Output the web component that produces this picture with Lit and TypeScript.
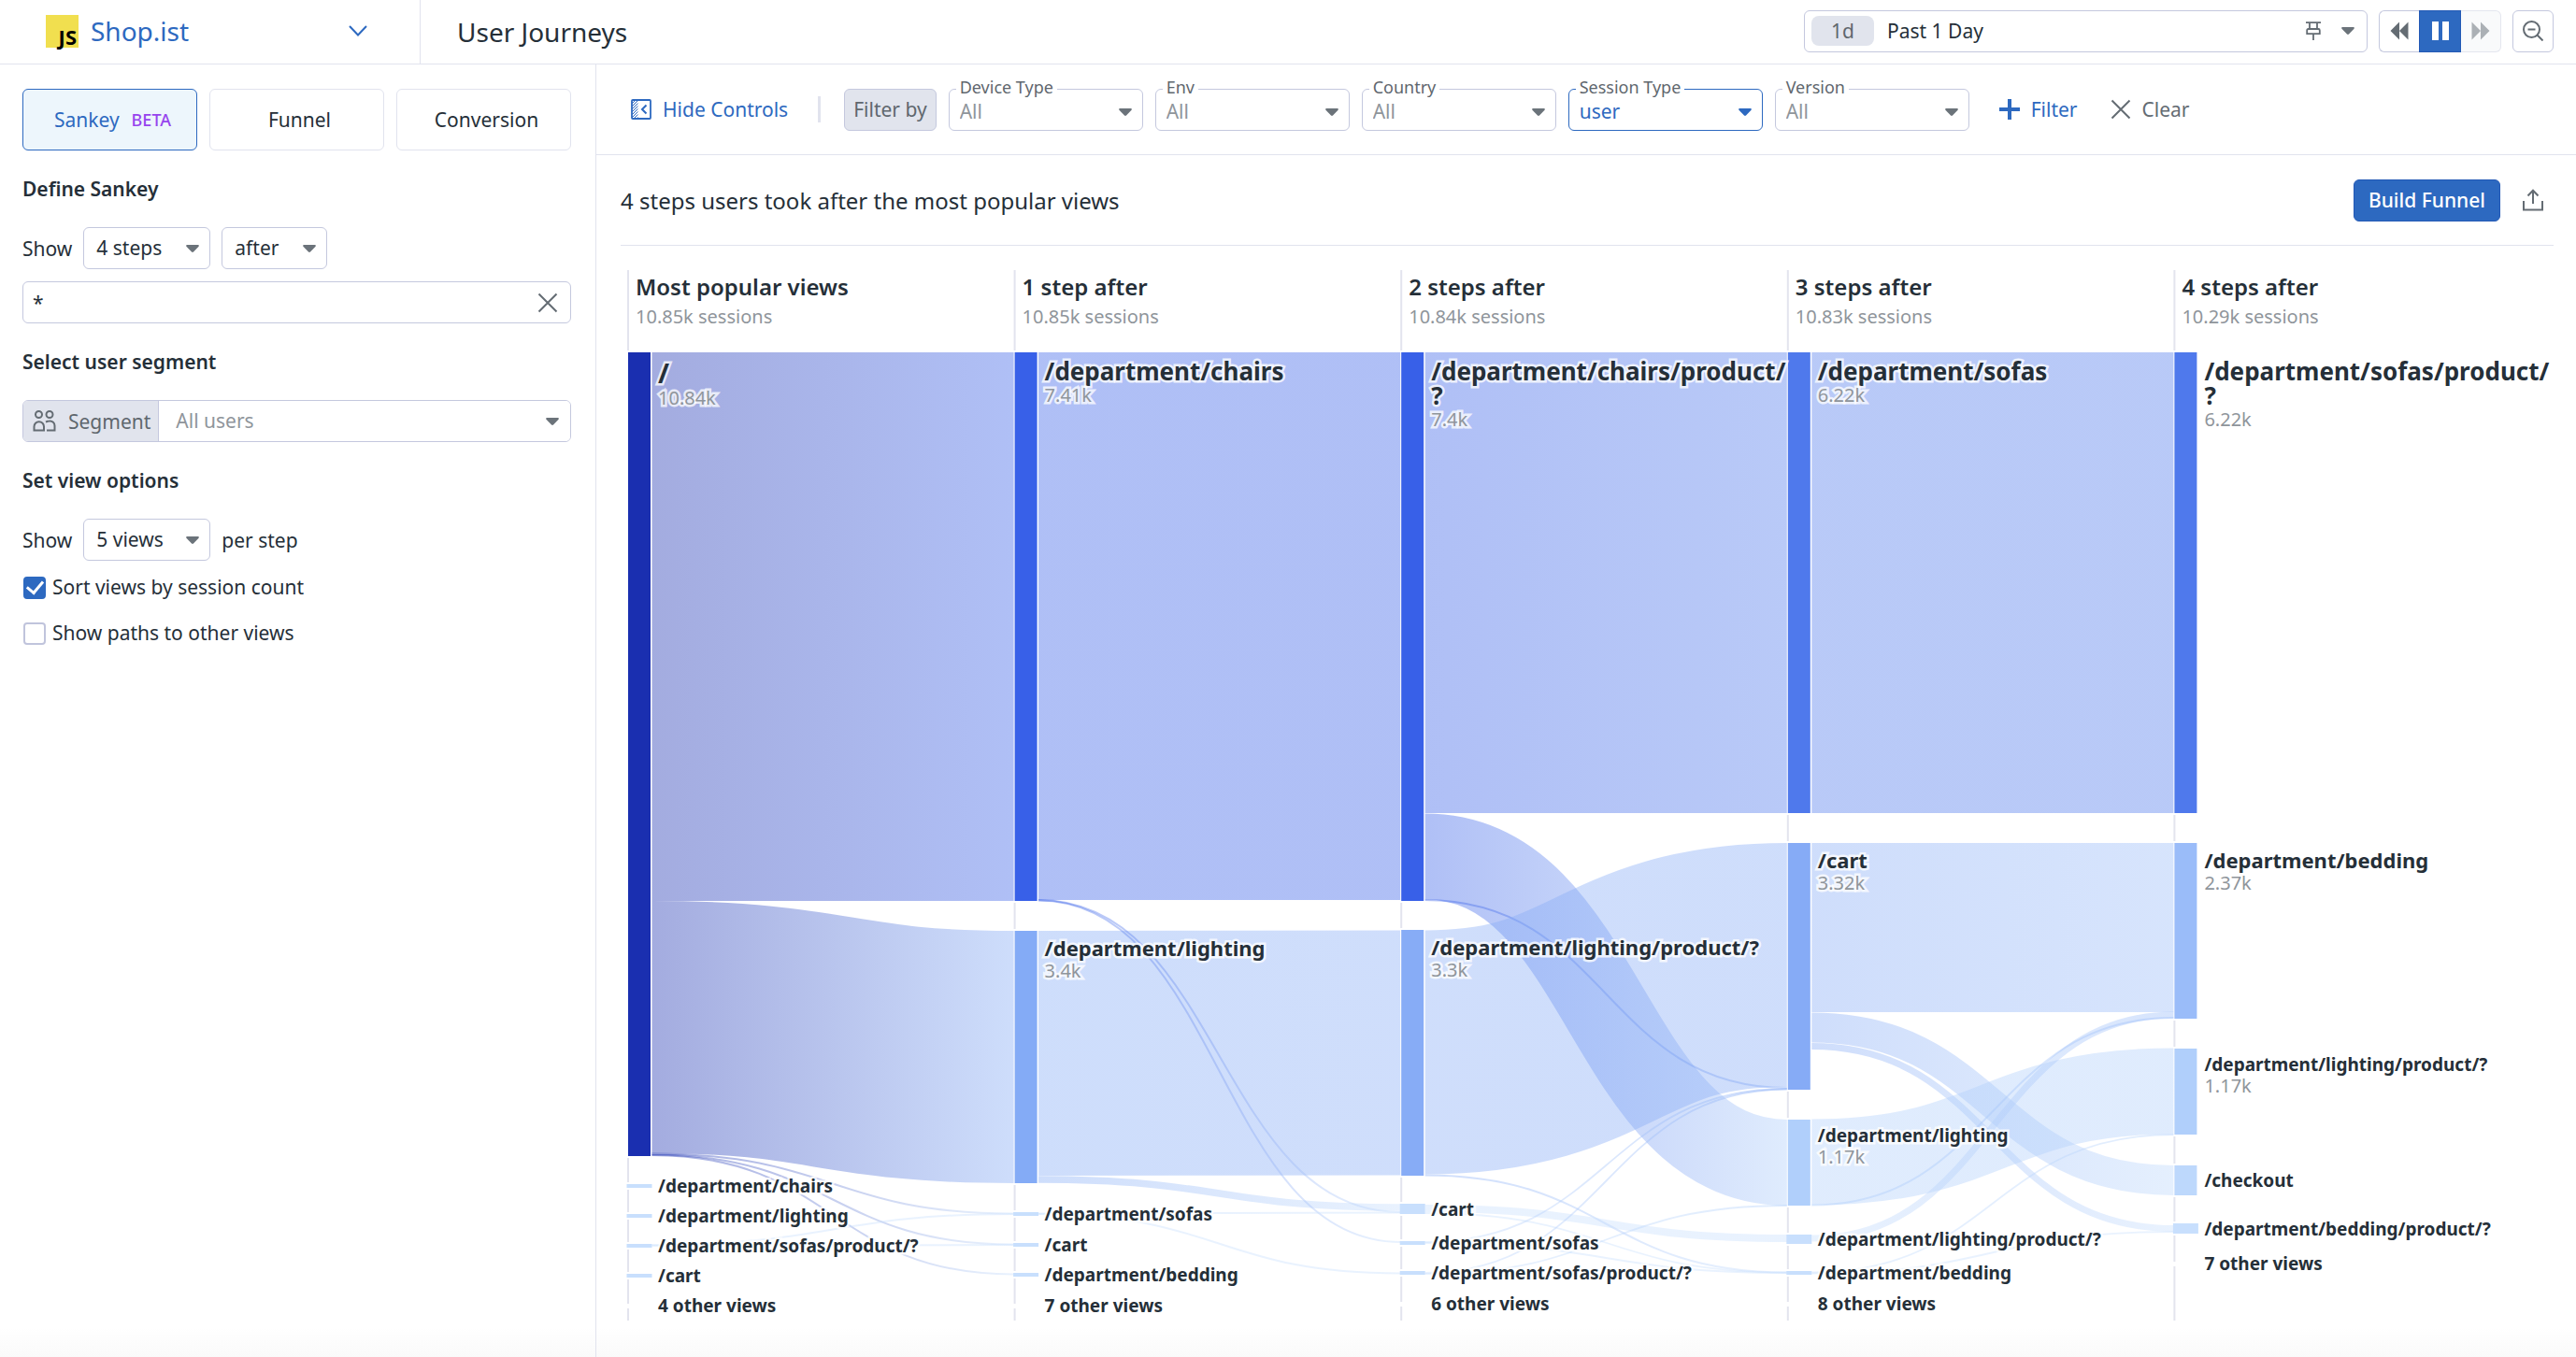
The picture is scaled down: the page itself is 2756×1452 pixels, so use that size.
import { LitElement, html, svg, css, nothing } from "lit";
import { customElement, property, state } from "lit/decorators.js";
import { classMap } from "lit/directives/class-map.js";

const controls = css`
  * {
    box-sizing: border-box;
  }
  button,
  input,
  select {
    font: inherit;
    color: inherit;
    margin: 0;
  }
  button {
    cursor: pointer;
    background: none;
    border: 0;
    padding: 0;
  }
  svg {
    display: block;
    flex: none;
  }
  .pick {
    position: relative;
    display: flex;
    align-items: center;
  }
  .pick select {
    appearance: none;
    width: 100%;
    height: 45px;
    border: 1px solid #c4c8de;
    border-radius: 6px;
    background: #fff;
    padding: 0 36px 2px 13px;
    outline: 0;
  }
  .pick .caret {
    position: absolute;
    right: 11px;
    pointer-events: none;
  }
`;

const caret = (color = "#6b737a") => html`<svg class="caret" width="16" height="10" viewBox="0 0 16 10">
  <path d="M2 1h12q1.400 .3.600 1.700L9 8.500q-1 .8-2 0L1.400 2.700Q.6 1.300 2 1z" fill=${color} />
</svg>`;

const cross = html`<svg width="22" height="22" viewBox="0 0 22 22">
  <path d="M1.500 1.500l19 19M20.500 1.500l-19 19" stroke="#646c73" stroke-width="2" fill="none" />
</svg>`;

/* ---------- top bar ---------- */

@customElement("top-bar")
class TopBar extends LitElement {
  static styles = [
    controls,
    css`
      :host {
        display: flex;
        height: 69px;
        border-bottom: 1px solid #e1e3ee;
      }
      .app {
        width: 450px;
        border-right: 1px solid #e1e3ee;
        display: flex;
        align-items: center;
        padding: 0 56px 2px 49px;
        gap: 13px;
        font-size: 28px;
        color: #2d69c0;
        text-align: left;
      }
      .app svg {
        overflow: visible;
      }
      .app .name {
        flex: 1;
      }
      .title {
        margin: 0;
        flex: 1;
        padding-left: 39px;
        align-self: center;
        font-size: 28px;
        line-height: 40px;
        font-weight: 400;
      }
      .time {
        display: flex;
        align-items: center;
        gap: 12px;
        padding: 0 24px 2px 0;
      }
      .range {
        width: 603px;
        height: 45px;
        border: 1px solid #c4c8de;
        border-radius: 6px;
        display: flex;
        align-items: center;
        padding: 0 12px 0 7px;
        text-align: left;
      }
      .pill {
        width: 67px;
        height: 32px;
        line-height: 32px;
        border-radius: 8px;
        background: #e1e4ed;
        color: #5f676e;
        text-align: center;
        margin-right: 14px;
      }
      .range .text {
        flex: 1;
      }
      .range .pin {
        margin-right: 21px;
      }
      .play {
        display: flex;
        height: 45px;
      }
      .play button {
        width: 43px;
        border: 1px solid #c4c8de;
        display: grid;
        place-items: center;
      }
      .play .back {
        border-radius: 6px 0 0 6px;
        border-right: 0;
      }
      .play .pause {
        width: 45px;
        background: #2d69c0;
        border-color: #2359b5;
      }
      .play .next {
        border-radius: 0 6px 6px 0;
        border-left: 0;
        border-color: #e4e6ef;
        background: #f9fafb;
      }
      .zoom {
        width: 44px;
        height: 45px;
        border: 1px solid #c4c8de;
        border-radius: 6px;
        display: grid;
        place-items: center;
      }
    `,
  ];

  render() {
    return html`
      <button class="app">
        <svg width="35" height="35" viewBox="0 0 35 35">
          <rect width="35" height="35" fill="#f1df4f" />
          <text x="33" y="32" text-anchor="end" font-family="Noto Sans, sans-serif" font-weight="700" font-size="22" fill="#000">JS</text>
        </svg>
        <span class="name">Shop.ist</span>
        <svg width="20" height="12" viewBox="0 0 20 12">
          <path d="M1 1l9 9.500L19 1" fill="none" stroke="#2d69c0" stroke-width="2" />
        </svg>
      </button>
      <h1 class="title">User Journeys</h1>
      <div class="time">
        <button class="range">
          <span class="pill">1d</span>
          <span class="text">Past 1 Day</span>
          <svg class="pin" width="16" height="20" viewBox="0 0 16 20">
            <path d="M0 1.200h16M4 1.500V8M12 1.500V8M1.200 13.200V9.500Q1.200 8 2.700 8h10.600q1.500 0 1.500 1.500v3.700zM8 13.500V20" fill="none" stroke="#646c73" stroke-width="1.800" />
          </svg>
          ${caret()}
        </button>
        <div class="play">
          <button class="back" aria-label="Back">
            <svg width="20" height="20" viewBox="0 0 20 20"><path d="M10 .5v19L.5 10zM19.500 .5v19L10 10z" fill="#646c73" /></svg>
          </button>
          <button class="pause" aria-label="Pause">
            <svg width="18" height="20" viewBox="0 0 18 20"><path d="M0 0h7v20H0zM11 0h7v20h-7z" fill="#fff" /></svg>
          </button>
          <button class="next" aria-label="Forward" disabled>
            <svg width="20" height="20" viewBox="0 0 20 20"><path d="M.5 .5v19L10 10zM10 .5v19L19.500 10z" fill="#abb0b5" /></svg>
          </button>
        </div>
        <button class="zoom" aria-label="Zoom out">
          <svg width="22" height="22" viewBox="0 0 22 22">
            <circle cx="9.500" cy="9.500" r="8.500" fill="none" stroke="#646c73" stroke-width="2" />
            <path d="M5.500 9.500h8M15.500 15.500l6 6" stroke="#646c73" stroke-width="2" />
          </svg>
        </button>
      </div>
    `;
  }
}

/* ---------- side panel ---------- */

@customElement("side-panel")
class SidePanel extends LitElement {
  @state() private mode = "Sankey";

  static styles = [
    controls,
    css`
      :host {
        display: block;
        padding: 26px 26px 0 24px;
      }
      .tabs {
        display: grid;
        grid-template-columns: repeat(3, 1fr);
        gap: 13px;
      }
      .tab {
        height: 66px;
        border: 1px solid #e1e3ee;
        border-radius: 6px;
        display: flex;
        align-items: center;
        justify-content: center;
        gap: 13px;
        padding-left: 6px;
      }
      .on {
        border-color: #2d69c0;
        background: #edf6fc;
        color: #2d69c0;
      }
      .beta {
        font-size: 18px;
        font-weight: 500;
        color: #9744ee;
      }
      h2 {
        margin: 26px 0;
        font-size: 21px;
        line-height: 30px;
        font-weight: 600;
      }
      .line {
        display: flex;
        align-items: center;
        gap: 12px;
      }
      .steps {
        width: 136px;
      }
      .when {
        width: 113px;
      }
      .query {
        position: relative;
        margin-top: 13px;
        display: flex;
        align-items: center;
      }
      .query input {
        width: 100%;
        height: 45px;
        border: 1px solid #c4c8de;
        border-radius: 6px;
        padding: 0 48px 0 10px;
      }
      .query button {
        position: absolute;
        right: 14px;
      }
      .segment {
        display: flex;
        height: 45px;
        border: 1px solid #c4c8de;
        border-radius: 6px;
        overflow: hidden;
      }
      .segment label {
        display: flex;
        align-items: center;
        gap: 13px;
        padding: 0 8px 0 10px;
        background: #e1e4ed;
        border-right: 1px solid #c4c8de;
        color: #5f676e;
      }
      .segment .pick {
        flex: 1;
        color: #8f959b;
      }
      .segment select {
        border: 0;
        border-radius: 0;
        height: 43px;
        padding-left: 18px;
      }
      .check {
        display: flex;
        align-items: center;
        gap: 7px;
        line-height: 29px;
        margin: 14px 0 20px 1px;
      }
      .check input {
        appearance: none;
        width: 24px;
        height: 24px;
        border: 2px solid #c0c4dc;
        border-radius: 4px;
        display: grid;
        place-items: center;
      }
      .check input:checked {
        background: #2d69c0;
        border-color: #2d69c0;
      }
      .check input:checked::before {
        content: "";
        width: 8px;
        height: 14px;
        border: solid #fff;
        border-width: 0 3px 3px 0;
        transform: translateY(-2px) rotate(40deg);
      }
    `,
  ];

  render() {
    return html`
      <div class="tabs">
        ${["Sankey", "Funnel", "Conversion"].map(
          (m) => html`<button class=${classMap({ tab: true, on: this.mode === m })} @click=${() => (this.mode = m)}>
            ${m}${m === "Sankey" ? html`<span class="beta">BETA</span>` : nothing}
          </button>`
        )}
      </div>
      <h2>Define Sankey</h2>
      <div class="line">
        <label for="steps">Show</label>
        <span class="pick steps"><select id="steps"><option>4 steps</option></select>${caret()}</span>
        <span class="pick when"><select aria-label="Direction"><option>after</option></select>${caret()}</span>
      </div>
      <div class="query">
        <input type="text" value="*" aria-label="View" />
        <button aria-label="Clear view">${cross}</button>
      </div>
      <h2>Select user segment</h2>
      <div class="segment">
        <label for="segment">
          <svg width="25" height="23" viewBox="0 0 25 23" fill="none" stroke="#646c73" stroke-width="2">
            <circle cx="6.500" cy="4.500" r="3.500" />
            <circle cx="18" cy="4.500" r="3.500" />
            <path d="M1.500 21.500v-4a5 5 0 0 1 10.500 0v4zM14 12.500q2-1 4-1a5 5 0 0 1 5.500 5v5H15" />
          </svg>
          Segment
        </label>
        <span class="pick"><select id="segment"><option>All users</option></select>${caret()}</span>
      </div>
      <h2>Set view options</h2>
      <div class="line">
        <label for="views">Show</label>
        <span class="pick steps"><select id="views"><option>5 views</option></select>${caret()}</span>
        <span>per step</span>
      </div>
      <label class="check"><input type="checkbox" checked />Sort views by session count</label>
      <label class="check"><input type="checkbox" />Show paths to other views</label>
    `;
  }
}

/* ---------- filter bar ---------- */

@customElement("filter-bar")
class FilterBar extends LitElement {
  static styles = [
    controls,
    css`
      :host {
        display: flex;
        align-items: center;
        height: 97px;
        padding: 0 24px 0 37px;
        border-bottom: 1px solid #e1e3ee;
      }
      button {
        display: flex;
        align-items: center;
        gap: 12px;
        color: #646c73;
      }
      .blue {
        color: #2d69c0;
      }
      .rule {
        width: 3px;
        height: 28px;
        background: #e1e3ee;
        margin: 0 25px 0 32px;
      }
      .by {
        height: 45px;
        line-height: 43px;
        padding: 0 9px;
        border: 1px solid #c4c8de;
        border-radius: 6px;
        background: #e1e4ed;
        color: #5f676e;
      }
      .pick {
        width: 208px;
        margin-left: 13px;
        color: #8f959b;
      }
      .pick label {
        position: absolute;
        left: 8px;
        top: -14px;
        padding: 0 4px;
        background: #fff;
        font-size: 18px;
        line-height: 24px;
        color: #5f676e;
      }
      .pick select {
        padding: 4px 36px 0 11px;
      }
      .pick .caret {
        top: 20px;
      }
      .active select {
        border-color: #2d69c0;
        color: #2d69c0;
      }
      .add {
        margin: 0 35px 0 32px;
      }
    `,
  ];

  render() {
    const filters: [string, string][] = [
      ["Device Type", "All"],
      ["Env", "All"],
      ["Country", "All"],
      ["Session Type", "user"],
      ["Version", "All"],
    ];
    return html`
      <button class="blue">
        <svg width="22" height="22" viewBox="0 0 22 22" fill="none" stroke="#2d69c0">
          <rect x="1" y="1" width="20" height="20" rx="1" stroke-width="1.800" />
          <path d="M1 5l4-4M1 8l6.500-6.500M1 11l6.500-6.500M1 14l6.500-6.500M1 17l6.500-6.500M1 20l6.500-6.500M3 21l4.500-4.500M6 21l1.500-1.500" stroke-width="1" />
          <path d="M16.500 6.500l-4.500 4.500 4.500 4.500" stroke-width="2" />
        </svg>
        Hide Controls
      </button>
      <span class="rule"></span>
      <span class="by">Filter by</span>
      ${filters.map(([name, value], i) => {
        const active = value !== "All";
        return html`<span class=${classMap({ pick: true, active })}>
          <select id="f${i}"><option>${value}</option></select>
          <label for="f${i}">${name}</label>
          ${caret(active ? "#2d69c0" : undefined)}
        </span>`;
      })}
      <button class="blue add">
        <svg width="22" height="22" viewBox="0 0 22 22"><path d="M11 0v22M0 11h22" stroke="#2d69c0" stroke-width="4" /></svg>
        Filter
      </button>
      <button>${cross} Clear</button>
    `;
  }
}

/* ---------- sankey chart ---------- */

interface ViewNode {
  name: string;
  top: number;
  bottom: number;
  color: string;
  count?: string;
  size?: "xl" | "lg" | "md";
}
interface Step {
  title: string;
  sessions: string;
  nodes: ViewNode[];
  others: string;
  othersAt: number;
}

const TINY = "#c8dffd";
const node = (name: string, top: number, bottom: number, color = TINY, count?: string, size?: ViewNode["size"]): ViewNode => ({ name, top, bottom, color, count, size });

const STEPS: Step[] = [
  {
    title: "Most popular views",
    sessions: "10.85k sessions",
    nodes: [
      node("/", 88, 948, "#1a2fb0", "10.84k", "xl"),
      node("/department/chairs", 978, 982),
      node("/department/lighting", 1010, 1014),
      node("/department/sofas/product/?", 1042, 1046),
      node("/cart", 1074, 1078),
    ],
    others: "4 other views",
    othersAt: 1108,
  },
  {
    title: "1 step after",
    sessions: "10.85k sessions",
    nodes: [
      node("/department/chairs", 88, 675, "#3860e8", "7.41k", "lg"),
      node("/department/lighting", 707, 977, "#84abf6", "3.4k", "md"),
      node("/department/sofas", 1008, 1012),
      node("/cart", 1041, 1045),
      node("/department/bedding", 1073, 1077),
    ],
    others: "7 other views",
    othersAt: 1108,
  },
  {
    title: "2 steps after",
    sessions: "10.84k sessions",
    nodes: [
      node("/department/chairs/product/\n?", 88, 675, "#3860e8", "7.4k", "lg"),
      node("/department/lighting/product/?", 706, 969, "#87acf6", "3.3k", "md"),
      node("/cart", 999, 1010),
      node("/department/sofas", 1039, 1043),
      node("/department/sofas/product/?", 1071, 1075),
    ],
    others: "6 other views",
    othersAt: 1106,
  },
  {
    title: "3 steps after",
    sessions: "10.83k sessions",
    nodes: [
      node("/department/sofas", 88, 581, "#4f79ec", "6.22k", "lg"),
      node("/cart", 613, 877, "#86abf6", "3.32k", "md"),
      node("/department/lighting", 909, 1001, "#b0cffb", "1.17k"),
      node("/department/lighting/product/?", 1032, 1042),
      node("/department/bedding", 1071, 1075),
    ],
    others: "8 other views",
    othersAt: 1106,
  },
  {
    title: "4 steps after",
    sessions: "10.29k sessions",
    nodes: [
      node("/department/sofas/product/\n?", 88, 581, "#4f79ec", "6.22k", "lg"),
      node("/department/bedding", 613, 801, "#9abcf9", "2.37k", "md"),
      node("/department/lighting/product/?", 833, 925, "#b0cffb", "1.17k"),
      node("/checkout", 958, 990, "#bdd8fc"),
      node("/department/bedding/product/?", 1020, 1031),
    ],
    others: "7 other views",
    othersAt: 1063,
  },
];

/* step, source node, target node, source centre, target centre, thickness */
const LINKS: [number, number, number, number, number, number][] = [
  [0, 0, 0, 381.5, 381.5, 587],
  [0, 0, 1, 810, 842, 270],
  [0, 0, 2, 945.5, 1009.5, 2],
  [0, 0, 3, 946.5, 1042.5, 2],
  [0, 0, 4, 947, 1074.5, 2],
  [0, 3, 2, 1043, 1010, 2],
  [0, 3, 3, 1044, 1043, 2],
  [1, 0, 0, 381, 381, 586],
  [1, 1, 1, 838, 837.5, 262],
  [1, 1, 2, 973, 1003, 7.5],
  [1, 0, 2, 674, 1008, 2],
  [1, 0, 3, 674.5, 1040, 2],
  [1, 2, 2, 1009.5, 1008.5, 2],
  [1, 2, 4, 1010, 1073.5, 2],
  [2, 0, 0, 334.5, 334.5, 493],
  [2, 0, 2, 627.5, 955, 92],
  [2, 0, 1, 674, 875, 2],
  [2, 1, 1, 837, 743.5, 261],
  [2, 1, 4, 968.5, 1072.5, 2],
  [2, 2, 3, 1004, 1036, 8],
  [2, 2, 4, 1009, 1072.5, 1.8],
  [2, 3, 1, 1040, 876, 1.8],
  [2, 3, 4, 1041, 1073, 1.8],
  [2, 4, 1, 1073, 876.5, 1.8],
  [2, 4, 2, 1074, 1001, 1.8],
  [3, 0, 0, 334.5, 334.5, 493],
  [3, 1, 1, 703.5, 703.5, 181],
  [3, 1, 3, 810.5, 974, 32],
  [3, 1, 4, 830.5, 1025.500, 7],
  [3, 2, 2, 954.5, 878.5, 92],
  [3, 2, 1, 1000.5, 800, 2],
  [3, 3, 1, 1036, 797, 7],
  [3, 4, 2, 1072.5, 925, 1.8],
  [3, 4, 4, 1073.5, 1029, 1.8],
];

@customElement("sankey-chart")
class SankeyChart extends LitElement {
  @property({ attribute: false }) steps: Step[] = STEPS;

  static styles = css`
    :host {
      display: block;
      position: relative;
    }
    svg {
      display: block;
      width: 100%;
      height: 1124px;
      overflow: visible;
    }
    .labels {
      position: absolute;
      inset: 0;
      display: grid;
      grid-template-columns: repeat(5, 1fr);
    }
    .step {
      position: relative;
      padding: 2px 0 0 8px;
    }
    h3 {
      margin: 0;
      font-size: 24px;
      line-height: 32px;
      font-weight: 600;
    }
    .sessions {
      font-size: 20px;
      line-height: 32px;
      color: #8f959b;
    }
    .label {
      position: absolute;
      left: 32px;
      font-size: 19px;
      line-height: 20px;
      white-space: nowrap;
      paint-order: stroke;
      -webkit-text-stroke: 5px rgba(255, 255, 255, 0.75);
    }
    .name {
      display: block;
      font-weight: 700;
      white-space: pre;
    }
    .md .name {
      font-size: 22px;
      line-height: 23px;
    }
    .lg .name {
      font-size: 26px;
      line-height: 26px;
    }
    .xl .name {
      font-size: 29px;
      line-height: 29px;
    }
    .count {
      display: block;
      font-size: 20px;
      line-height: 26px;
      color: #8f959b;
    }
  `;

  private x(step: number) {
    return step * 413.6;
  }

  render() {
    return html`
      <svg viewBox="0 0 2068 1124" preserveAspectRatio="none" aria-hidden="true">
        <defs>
          ${LINKS.map(
            ([s, a, b], i) => svg`<linearGradient id="g${i}" gradientUnits="userSpaceOnUse" x1=${this.x(s) + 25} x2=${this.x(s + 1)} y1="0" y2="0">
              <stop offset="0" stop-color=${this.steps[s].nodes[a].color} />
              <stop offset="1" stop-color=${this.steps[s + 1].nodes[b].color} />
            </linearGradient>`
          )}
        </defs>
        ${this.steps.map(
          (st, s) => svg`
            <path d="M${this.x(s)} 0V${st.othersAt - 2}M${this.x(s)} ${st.othersAt + 3}V1124" stroke="#e3e4ee" stroke-width="2" />
            ${st.nodes.map((n) => svg`<rect x=${this.x(s) - 2} y=${n.top - 2} width="28" height=${n.bottom - n.top + 4} fill="#fff" />`)}`
        )}
        ${LINKS.map(([s, , , y0, y1, w], i) => {
          const x0 = this.x(s) + 25.5;
          const x1 = this.x(s + 1) - 1;
          const m = (x0 + x1) / 2;
          return svg`<path d="M${x0} ${y0}C${m} ${y0} ${m} ${y1} ${x1} ${y1}" fill="none" stroke="url(#g${i})" stroke-opacity=".4" stroke-width=${w} />`;
        })}
        ${this.steps.map((st, s) =>
          st.nodes.map((n) => {
            const tiny = n.color === TINY;
            return svg`<rect x=${this.x(s) + (tiny ? -1.5 : 0)} y=${n.top} width=${tiny ? 27 : 24} height=${n.bottom - n.top} fill=${n.color} />`;
          })
        )}
      </svg>
      <div class="labels">
        ${this.steps.map(
          (st) => html`<section class="step">
            <h3>${st.title}</h3>
            <div class="sessions">${st.sessions}</div>
            ${st.nodes.map((n) => {
              const top = n.count ? n.top + 7 : Math.round((n.top + n.bottom) / 2) - 10;
              return html`<div class="label ${n.size ?? ""}" style="top:${top}px">
                <span class="name">${n.name}</span>${n.count ? html`<span class="count">${n.count}</span>` : nothing}
              </div>`;
            })}
            <div class="label" style="top:${st.othersAt - 10}px"><span class="name">${st.others}</span></div>
          </section>`
        )}
      </div>
    `;
  }
}

/* ---------- page ---------- */

@customElement("app-root")
class AppRoot extends LitElement {
  static styles = [
    controls,
    css`
      :host {
        display: flex;
        flex-direction: column;
        min-height: 100vh;
        font-family: "Noto Sans", sans-serif;
        font-size: 21px;
        color: #252f38;
        background: linear-gradient(to top, #fafafa, #fff 32px);
      }
      .body {
        flex: 1;
        display: grid;
        grid-template-columns: 638px 1fr;
      }
      side-panel {
        border-right: 1px solid #e1e3ee;
      }
      .head {
        display: flex;
        align-items: center;
        height: 97px;
        margin: 0 24px 26px 26px;
        border-bottom: 1px solid #e1e3ee;
      }
      h2 {
        flex: 1;
        margin: 0;
        font-size: 24px;
        font-weight: 400;
      }
      .build {
        height: 45px;
        padding: 0 15px;
        border-radius: 6px;
        border: 1px solid #2359b5;
        background: #2d69c0;
        color: #fff;
        font-weight: 500;
      }
      .share {
        margin: 0 11px 0 24px;
      }
      sankey-chart {
        margin: 0 16px 39px 34px;
      }
    `,
  ];

  render() {
    return html`
      <top-bar></top-bar>
      <div class="body">
        <side-panel></side-panel>
        <main>
          <filter-bar></filter-bar>
          <div class="head">
            <h2>4 steps users took after the most popular views</h2>
            <button class="build">Build Funnel</button>
            <button class="share" aria-label="Share">
              <svg width="22" height="24" viewBox="0 0 22 24" fill="none" stroke="#646c73" stroke-width="2">
                <path d="M1 13v9.500h20V13M11 16V2M5.500 7.500L11 1.800l5.500 5.700" />
              </svg>
            </button>
          </div>
          <sankey-chart></sankey-chart>
        </main>
      </div>
    `;
  }
}
